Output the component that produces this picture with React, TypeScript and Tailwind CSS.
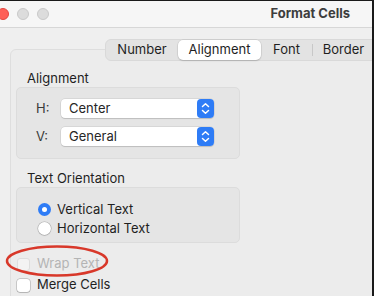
import React from "react";

const font = { fontFamily: "Inter, 'Noto Sans', sans-serif" };

function Chevrons() {
  return (
    <svg width="17" height="19" viewBox="0 0 17 19">
      <rect x="0" y="0" width="17" height="19" rx="4" fill="#2e7cf6" />
      <path d="M5.5 7.5 L8.5 4.8 L11.5 7.5" fill="none" stroke="#fff" strokeWidth="1.5" strokeLinecap="round" strokeLinejoin="round" />
      <path d="M5.5 11.5 L8.5 14.2 L11.5 11.5" fill="none" stroke="#fff" strokeWidth="1.5" strokeLinecap="round" strokeLinejoin="round" />
    </svg>
  );
}

function Popup({ label, value }: { label: string; value: string }) {
  return (
    <div className="flex items-center h-[19px]">
      <div className="w-[44px] pl-[19px] text-[13px] text-[#3a3a3a]">{label}</div>
      <div className="flex items-center justify-between w-[153px] h-[19px] bg-white rounded-[4px] shadow-[0_0_0_0.5px_rgba(0,0,0,0.12),0_1px_1px_rgba(0,0,0,0.12)] pl-[8px]">
        <span className="text-[13px] text-[#262626]">{value}</span>
        <Chevrons />
      </div>
    </div>
  );
}

function Radio({ checked, label }: { checked: boolean; label: string }) {
  return (
    <div className="flex items-center h-[19px]">
      {checked ? (
        <div className="w-[13px] h-[13px] rounded-full bg-[#2e7cf6] flex items-center justify-center">
          <div className="w-[5px] h-[5px] rounded-full bg-white" />
        </div>
      ) : (
        <div className="w-[13px] h-[13px] rounded-full bg-white shadow-[0_0_0_0.5px_rgba(0,0,0,0.25),0_1px_1px_rgba(0,0,0,0.1)]" />
      )}
      <span className="ml-[6px] text-[13px] text-[#1f1f1f]">{label}</span>
    </div>
  );
}

export default function App() {
  return (
    <div className="relative w-[374px] h-[296px] overflow-hidden bg-[#efefef] border-t border-[#1a1a1a] border-r-2 border-r-[#1a1a1a]" style={font}>
      {/* title bar */}
      <div className="h-[27px] bg-[#f6f6f6] border-b border-[#d7d7d7] flex items-center relative">
        <div className="flex items-center gap-[8px] -ml-[3px]">
          <div className="w-[12px] h-[12px] rounded-full bg-[#fe5f57] border border-[#e2463f]" />
          <div className="w-[12px] h-[12px] rounded-full bg-[#dcdcdc] border border-[#c9c9c9]" />
          <div className="w-[12px] h-[12px] rounded-full bg-[#dcdcdc] border border-[#c9c9c9]" />
        </div>
        <div className="ml-auto mr-[22px] text-[13px] font-bold text-[#3d3d3d]">Format Cells</div>
      </div>

      {/* segmented control */}
      <div className="relative z-10 mt-[11px] ml-[105px] flex h-[22px] w-[300px] rounded-[6px] bg-[#e3e3e3] border border-[#d9d9d9] items-center text-[13px] text-[#1f1f1f]">
        <div className="w-[72px] text-center">Number</div>
        <div className="w-[83px] h-[20px] bg-white rounded-[5px] shadow-[0_0_0_0.5px_rgba(0,0,0,0.1),0_1px_1.5px_rgba(0,0,0,0.15)] flex items-center justify-center">Alignment</div>
        <div className="w-[51px] text-center">Font</div>
        <div className="w-px h-[12px] bg-[#c8c8c8]" />
        <div className="w-[61px] text-center">Border</div>
      </div>

      {/* panel */}
      <div className="-mt-[12px] ml-[10px] w-[400px] h-[300px] bg-[#ececec] border border-[#dedede] rounded-[6px] pl-[5px] pt-[20px]">
        <div className="ml-[11px] text-[13px] text-[#1f1f1f] leading-[16px]">Alignment</div>
        <div className="mt-[1px] w-[224px] h-[72px] bg-[#e5e5e5] border border-[#dcdcdc] rounded-[5px] pt-[11px] flex flex-col gap-[9px]">
          <Popup label="H:" value="Center" />
          <Popup label="V:" value="General" />
        </div>

        <div className="mt-[11px] ml-[11px] text-[13px] text-[#1f1f1f] leading-[16px]">Text Orientation</div>
        <div className="mt-[1px] w-[224px] h-[56px] bg-[#e5e5e5] border border-[#dcdcdc] rounded-[5px] pt-[12px] pl-[21px] flex flex-col">
          <Radio checked label="Vertical Text" />
          <Radio checked={false} label="Horizontal Text" />
        </div>

        <div className="mt-[14px] flex flex-col gap-[7px] ml-[1px]">
          <div className="flex items-center h-[14px]">
            <div className="w-[13px] h-[13px] rounded-[3px] bg-[#f3f3f3] border border-[#dedede]" />
            <span className="ml-[7px] text-[13px] text-[#b4b4b4]">Wrap Text</span>
          </div>
          <div className="flex items-center h-[14px]">
            <div className="w-[13px] h-[13px] rounded-[3px] bg-white shadow-[0_0_0_0.5px_rgba(0,0,0,0.3),0_1px_1px_rgba(0,0,0,0.1)]" />
            <span className="ml-[7px] text-[13px] text-[#1f1f1f]">Merge Cells</span>
          </div>
        </div>
      </div>

      {/* red annotation ellipse */}
      <svg className="absolute left-[5px] top-[243px]" width="104" height="34" viewBox="0 0 104 34">
        <ellipse cx="52" cy="17" rx="50" ry="14.5" fill="none" stroke="#d8382a" strokeWidth="2.5" />
      </svg>
    </div>
  );
}
